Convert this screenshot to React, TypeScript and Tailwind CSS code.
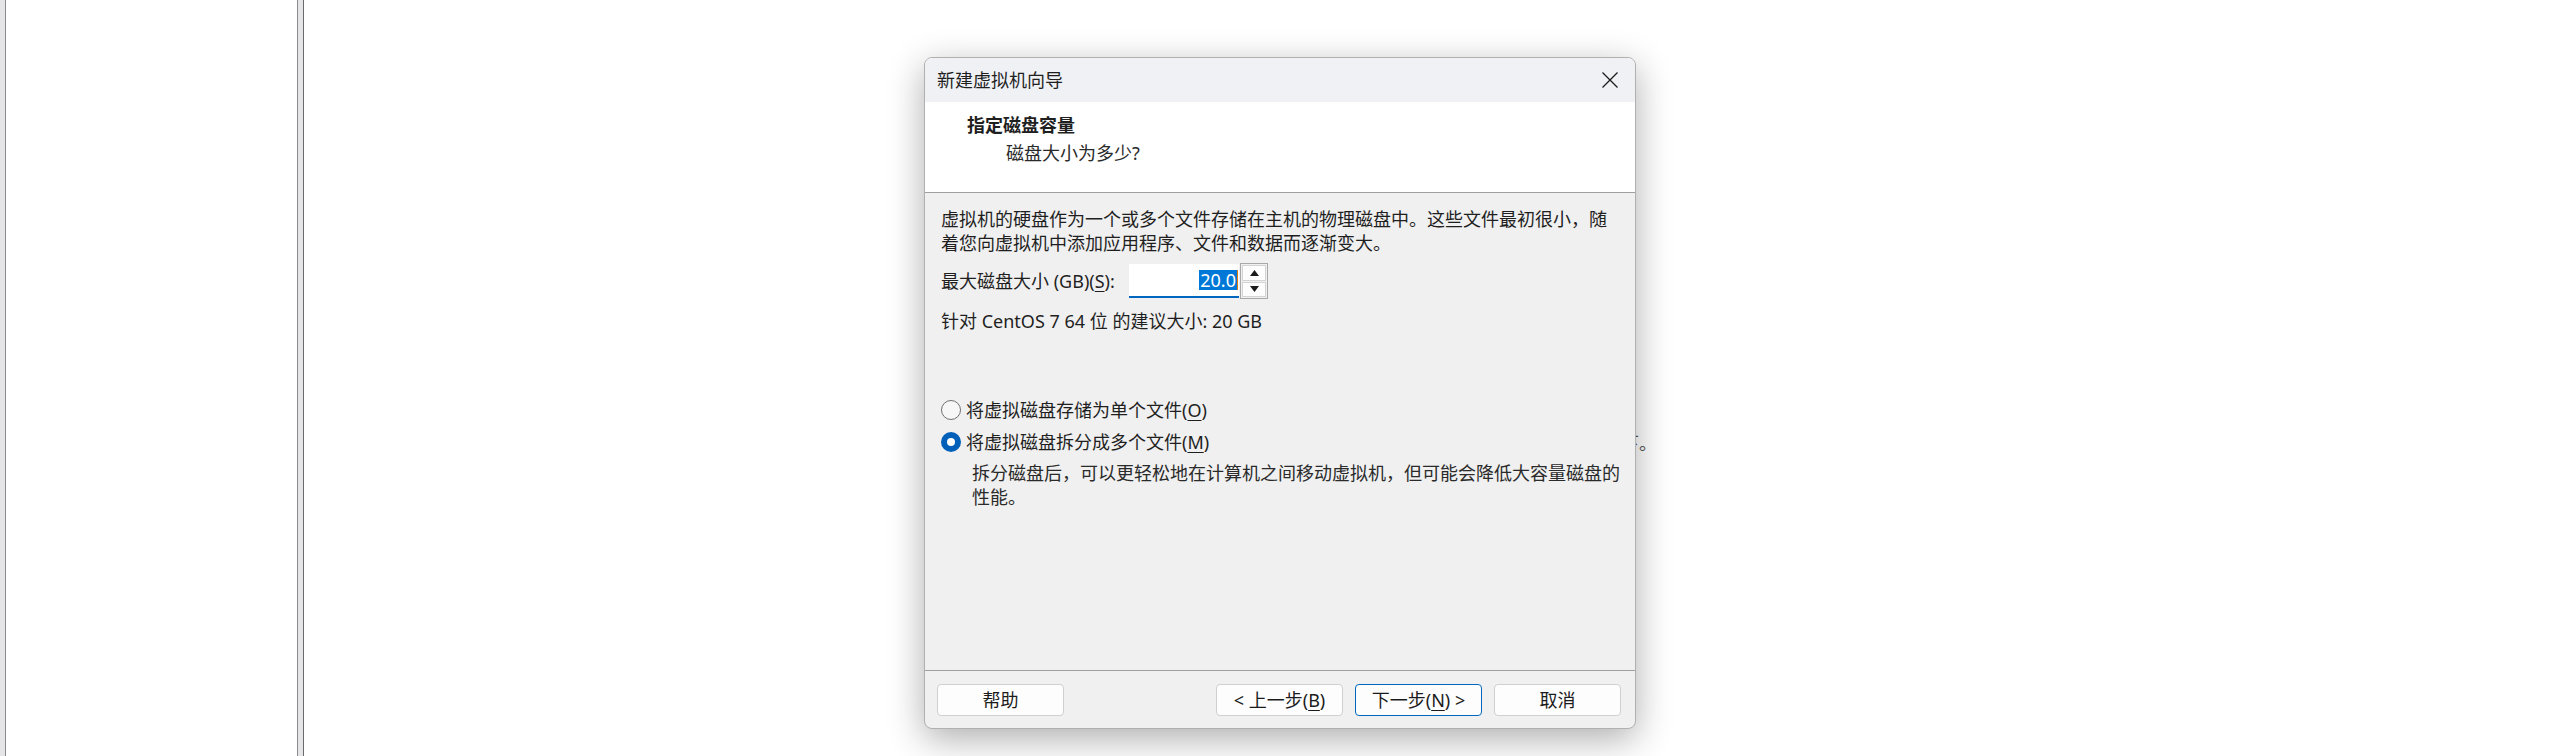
import React from "react";

function Ul({ children }: { children: React.ReactNode }) {
  return <span className="underline underline-offset-[3px] decoration-1">{children}</span>;
}

function WizardButton({ children, primary }: { children: React.ReactNode; primary?: boolean }) {
  return (
    <button
      className={
        primary
          ? "w-[127px] h-[32px] rounded-[4px] bg-[#fdfdfd] border border-[#0067c0] text-[18px] text-[#1b1b1b] leading-none"
          : "w-[127px] h-[32px] rounded-[4px] bg-[#fdfdfd] border border-[#d0d0d0] text-[18px] text-[#1b1b1b] leading-none"
      }
    >
      {children}
    </button>
  );
}

function Radio({ checked }: { checked?: boolean }) {
  if (checked) {
    return (
      <span className="w-[20px] h-[20px] rounded-full bg-[#005fb8] flex items-center justify-center shrink-0">
        <span className="w-[8px] h-[8px] rounded-full bg-white" />
      </span>
    );
  }
  return <span className="w-[20px] h-[20px] rounded-full border-[1.5px] border-[#6f6f6f] bg-[#f7f7f7] shrink-0" />;
}

export default function App() {
  return (
    <div className="relative flex h-[756px] w-full overflow-hidden bg-white font-['Noto_Sans','Noto_Sans_CJK_SC',sans-serif] text-[#1f1f1f]">
      {/* background window panes */}
      <div className="w-[5px] bg-[#e5e5e7]" />
      <div className="w-px bg-[#8a8a8e]" />
      <div className="w-[291px] bg-white" />
      <div className="w-px bg-[#8a8a8e]" />
      <div className="w-[5px] bg-[#e5e5e7]" />
      <div className="w-px bg-[#6a6a6e]" />
      <div className="flex-1 bg-white" />

      <span className="absolute left-[1621px] top-[434px] text-[18px] leading-[18px] text-[#555]">下。</span>

      {/* wizard dialog */}
      <div className="absolute left-[924px] top-[57px] flex h-[672px] w-[712px] flex-col overflow-hidden rounded-[8px] border border-[#b0b0b0] bg-[#f0f0f0] shadow-[0_10px_36px_rgba(0,0,0,0.32)]">
        <div className="flex h-[44px] items-center justify-between bg-[#eff1f5] pl-[12px] pr-[16px]">
          <span className="text-[18px] leading-none">新建虚拟机向导</span>
          <svg width="16" height="16" viewBox="0 0 16 16" className="mr-[1px]">
            <path d="M0.5 0.5 L15.5 15.5 M15.5 0.5 L0.5 15.5" stroke="#1b1b1b" strokeWidth="1.3" />
          </svg>
        </div>

        <div className="h-[91px] border-b border-[#a0a0a0] bg-white pl-[42px] pt-[11px]">
          <div className="text-[18px] font-bold leading-[24px]">指定磁盘容量</div>
          <div className="mt-[4px] pl-[39px] text-[18px] leading-[24px] text-[#2a2a2a]">磁盘大小为多少?</div>
        </div>

        <div className="flex flex-1 flex-col pl-[16px] pt-[14px] text-[18px] leading-[24px]">
          <div className="whitespace-nowrap">
            <div>虚拟机的硬盘作为一个或多个文件存储在主机的物理磁盘中。这些文件最初很小，随</div>
            <div>着您向虚拟机中添加应用程序、文件和数据而逐渐变大。</div>
          </div>

          <div className="mt-[8px] flex h-[36px] items-center">
            <span className="w-[188px] whitespace-nowrap">
              最大磁盘大小 (GB)(<Ul>S</Ul>):
            </span>
            <div className="flex h-[34px] w-[110px] items-center justify-end border-b-2 border-[#0067c0] bg-white pr-[1px]">
              <span className="bg-[#0078d7] px-[1px] text-[18px] leading-[20px] text-white">20.0</span>
              <span className="h-[20px] w-px bg-[#e07a00]" />
            </div>
            <div className="ml-px flex h-[36px] w-[28px] flex-col gap-px border border-[#a8a8a8] bg-[#f0f0f0] p-px">
              <div className="flex flex-1 items-center justify-center border border-[#d4d4d4] bg-[#fdfdfd]">
                <svg width="9" height="6" viewBox="0 0 9 6">
                  <path d="M4.5 0 L9 6 L0 6 Z" fill="#1b1b1b" />
                </svg>
              </div>
              <div className="flex flex-1 items-center justify-center border border-[#d4d4d4] bg-[#fdfdfd]">
                <svg width="9" height="6" viewBox="0 0 9 6">
                  <path d="M0 0 L9 0 L4.5 6 Z" fill="#1b1b1b" />
                </svg>
              </div>
            </div>
          </div>

          <div className="mt-[10px] whitespace-nowrap">针对 CentOS 7 64 位 的建议大小: 20 GB</div>

          <div className="mt-[65px] flex h-[24px] items-center gap-[5px]">
            <Radio />
            <span>
              将虚拟磁盘存储为单个文件(<Ul>O</Ul>)
            </span>
          </div>
          <div className="mt-[8px] flex h-[24px] items-center gap-[5px]">
            <Radio checked />
            <span>
              将虚拟磁盘拆分成多个文件(<Ul>M</Ul>)
            </span>
          </div>
          <div className="mt-[7px] whitespace-nowrap pl-[31px] text-[#2a2a2a]">
            <div>拆分磁盘后，可以更轻松地在计算机之间移动虚拟机，但可能会降低大容量磁盘的</div>
            <div>性能。</div>
          </div>
        </div>

        <div className="flex h-[58px] items-start border-t border-[#a0a0a0] pl-[12px] pr-[14px] pt-[13px]">
          <WizardButton>帮助</WizardButton>
          <div className="flex-1" />
          <div className="flex gap-[12px]">
            <WizardButton>
              &lt; 上一步(<Ul>B</Ul>)
            </WizardButton>
            <WizardButton primary>
              下一步(<Ul>N</Ul>) &gt;
            </WizardButton>
            <WizardButton>取消</WizardButton>
          </div>
        </div>
      </div>
    </div>
  );
}
